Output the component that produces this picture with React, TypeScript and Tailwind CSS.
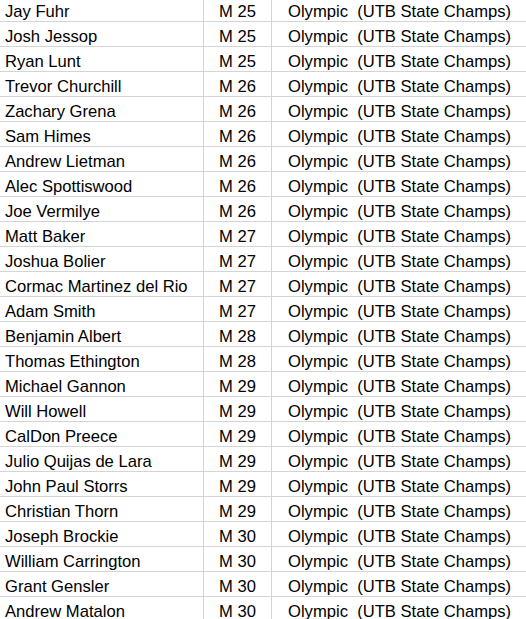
import React from 'react';

// [name, age group]
const rows: [string, string][] = [
    ['Jay Fuhr', 'M 25'],
    ['Josh Jessop', 'M 25'],
    ['Ryan Lunt', 'M 25'],
    ['Trevor Churchill', 'M 26'],
    ['Zachary Grena', 'M 26'],
    ['Sam Himes', 'M 26'],
    ['Andrew Lietman', 'M 26'],
    ['Alec Spottiswood', 'M 26'],
    ['Joe Vermilye', 'M 26'],
    ['Matt Baker', 'M 27'],
    ['Joshua Bolier', 'M 27'],
    ['Cormac Martinez del Rio', 'M 27'],
    ['Adam Smith', 'M 27'],
    ['Benjamin Albert', 'M 28'],
    ['Thomas Ethington', 'M 28'],
    ['Michael Gannon', 'M 29'],
    ['Will Howell', 'M 29'],
    ['CalDon Preece', 'M 29'],
    ['Julio Quijas de Lara', 'M 29'],
    ['John Paul Storrs', 'M 29'],
    ['Christian Thorn', 'M 29'],
    ['Joseph Brockie', 'M 30'],
    ['William Carrington', 'M 30'],
    ['Grant Gensler', 'M 30'],
    ['Andrew Matalon', 'M 30'],
];

const App: React.FC = () => {
    return (
        <div className="h-screen overflow-hidden bg-white text-black font-['Liberation_Sans',Arial,sans-serif] text-[16.6px]">
            {/* sheet is scrolled a few px, first row is clipped at the top */}
            <div className="-mt-[3px]">
                {rows.map(([name, group]) => (
                    <div key={name} className="flex h-[25px] border-b border-[#d4d4d4]">
                        <div className="w-[204px] shrink-0 border-r border-[#d4d4d4] pl-[5px] pt-[5px] leading-[19px] whitespace-pre">
                            {name}
                        </div>
                        <div className="w-[68px] shrink-0 border-r border-[#d4d4d4] pt-[5px] leading-[19px] text-center">
                            {group}
                        </div>
                        <div className="flex-1 pl-[16px] pt-[5px] leading-[19px] whitespace-pre">
                            Olympic  (UTB State Champs)
                        </div>
                    </div>
                ))}
            </div>
        </div>
    );
};

export default App;
